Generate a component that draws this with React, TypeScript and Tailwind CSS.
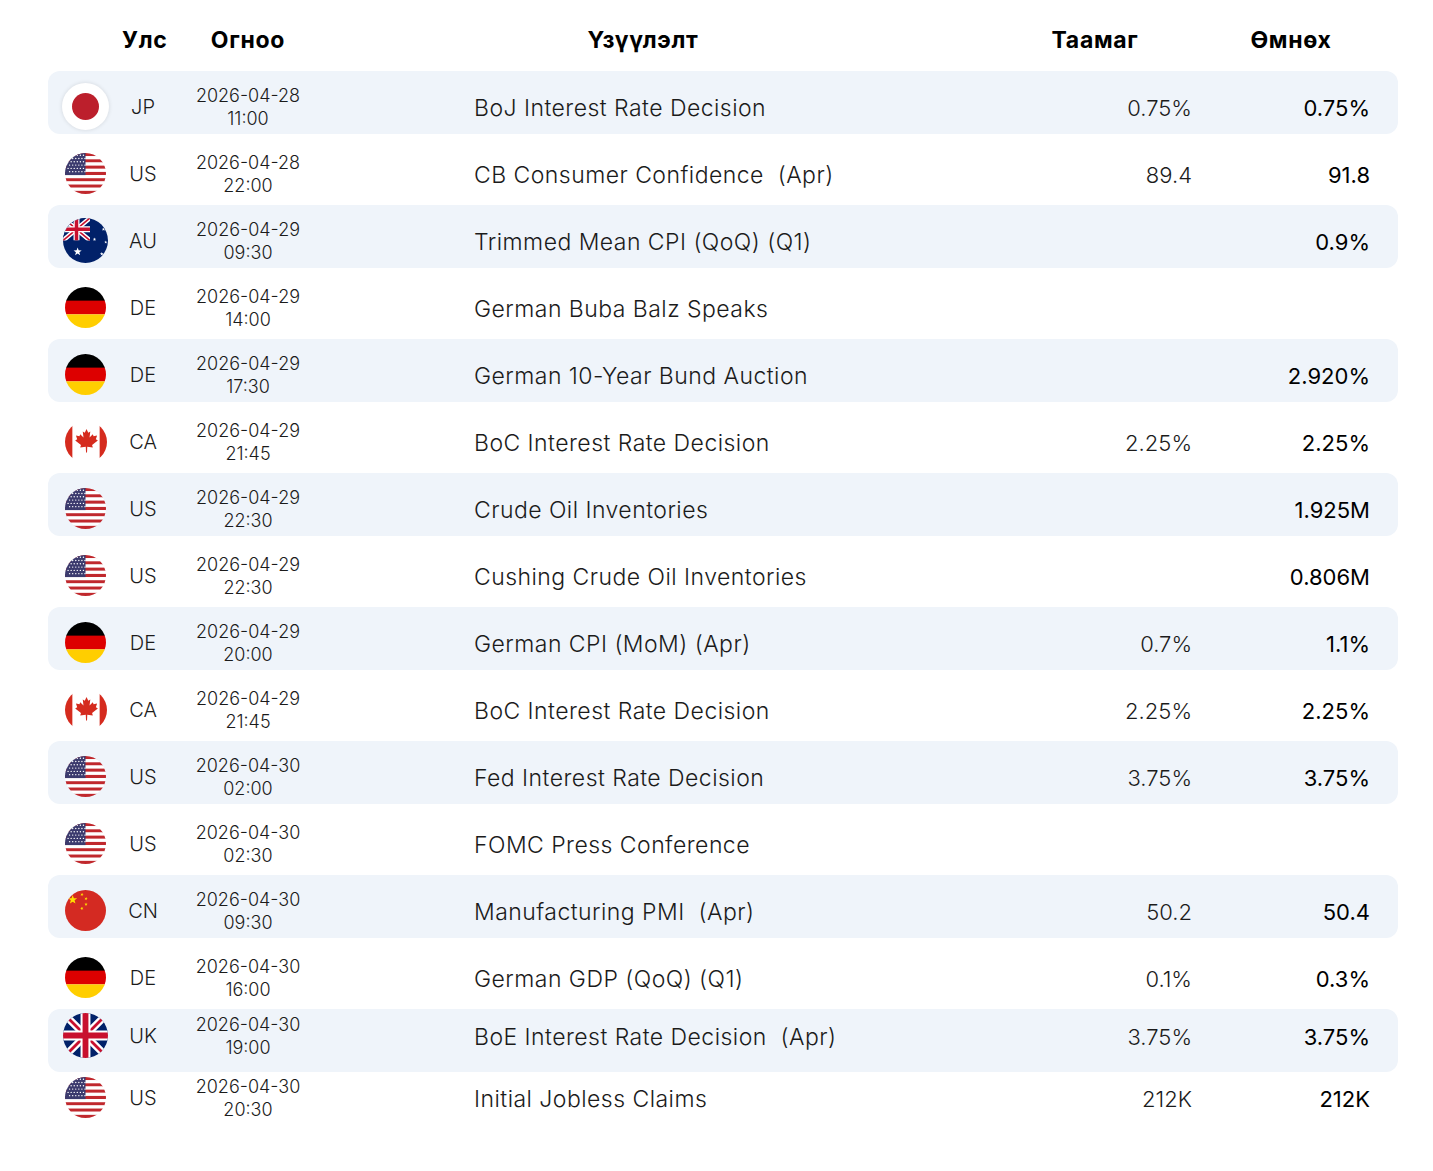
import { useId } from 'react'

type Code = 'JP' | 'US' | 'AU' | 'DE' | 'CA' | 'CN' | 'UK'

type Row = {
  code: Code
  date: string
  time: string
  event: string
  forecast?: string
  previous?: string
}

const rows: Row[] = [
  { code: 'JP', date: '2026-04-28', time: '11:00', event: 'BoJ Interest Rate Decision', forecast: '0.75%', previous: '0.75%' },
  { code: 'US', date: '2026-04-28', time: '22:00', event: 'CB Consumer Confidence  (Apr)', forecast: '89.4', previous: '91.8' },
  { code: 'AU', date: '2026-04-29', time: '09:30', event: 'Trimmed Mean CPI (QoQ) (Q1)', previous: '0.9%' },
  { code: 'DE', date: '2026-04-29', time: '14:00', event: 'German Buba Balz Speaks' },
  { code: 'DE', date: '2026-04-29', time: '17:30', event: 'German 10-Year Bund Auction', previous: '2.920%' },
  { code: 'CA', date: '2026-04-29', time: '21:45', event: 'BoC Interest Rate Decision', forecast: '2.25%', previous: '2.25%' },
  { code: 'US', date: '2026-04-29', time: '22:30', event: 'Crude Oil Inventories', previous: '1.925M' },
  { code: 'US', date: '2026-04-29', time: '22:30', event: 'Cushing Crude Oil Inventories', previous: '0.806M' },
  { code: 'DE', date: '2026-04-29', time: '20:00', event: 'German CPI (MoM) (Apr)', forecast: '0.7%', previous: '1.1%' },
  { code: 'CA', date: '2026-04-29', time: '21:45', event: 'BoC Interest Rate Decision', forecast: '2.25%', previous: '2.25%' },
  { code: 'US', date: '2026-04-30', time: '02:00', event: 'Fed Interest Rate Decision', forecast: '3.75%', previous: '3.75%' },
  { code: 'US', date: '2026-04-30', time: '02:30', event: 'FOMC Press Conference' },
  { code: 'CN', date: '2026-04-30', time: '09:30', event: 'Manufacturing PMI  (Apr)', forecast: '50.2', previous: '50.4' },
  { code: 'DE', date: '2026-04-30', time: '16:00', event: 'German GDP (QoQ) (Q1)', forecast: '0.1%', previous: '0.3%' },
  { code: 'UK', date: '2026-04-30', time: '19:00', event: 'BoE Interest Rate Decision  (Apr)', forecast: '3.75%', previous: '3.75%' },
  { code: 'US', date: '2026-04-30', time: '20:30', event: 'Initial Jobless Claims', forecast: '212K', previous: '212K' },
]

function star(cx: number, cy: number, r: number, rot = -90) {
  const pts: string[] = []
  for (let i = 0; i < 10; i++) {
    const rad = i % 2 === 0 ? r : r * 0.42
    const a = ((rot + i * 36) * Math.PI) / 180
    pts.push(`${(cx + rad * Math.cos(a)).toFixed(2)},${(cy + rad * Math.sin(a)).toFixed(2)}`)
  }
  return pts.join(' ')
}

function UnionJack({ w, h }: { w: number; h: number }) {
  const sw = w / 5
  return (
    <g>
      <rect width={w} height={h} fill="#012169" />
      <path d={`M0 0L${w} ${h}M${w} 0L0 ${h}`} stroke="#fff" strokeWidth={w / 6} />
      <path d={`M0 0L${w} ${h}M${w} 0L0 ${h}`} stroke="#C8102E" strokeWidth={w / 16} />
      <path d={`M${w / 2} 0V${h}M0 ${h / 2}H${w}`} stroke="#fff" strokeWidth={sw * 1.1} />
      <path d={`M${w / 2} 0V${h}M0 ${h / 2}H${w}`} stroke="#C8102E" strokeWidth={sw * 0.65} />
    </g>
  )
}

function Flag({ code }: { code: Code }) {
  const id = useId().replace(/:/g, '')
  if (code === 'JP') {
    return (
      <div className="flex h-[47px] w-[47px] items-center justify-center rounded-full bg-white shadow-[0_0_4px_rgba(0,0,0,0.12)]">
        <div className="h-[27px] w-[27px] rounded-full bg-[#bc1f2c]" />
      </div>
    )
  }
  const size = code === 'AU' || code === 'UK' ? 45 : code === 'CA' ? 42 : 41
  let body: React.ReactNode = null
  if (code === 'US') {
    const stripes = []
    for (let i = 0; i < 13; i++) {
      stripes.push(<rect key={i} y={(i * 40) / 13} width={40} height={40 / 13 + 0.05} fill={i % 2 === 0 ? '#c0282d' : '#ffffff'} />)
    }
    const dots = []
    for (let r = 0; r < 6; r++) {
      for (let c = 0; c < 6; c++) {
        dots.push(<circle key={`${r}-${c}`} cx={3 + c * 3 + (r % 2) * 1.5} cy={2.2 + r * 3.2} r={0.7} fill="#fff" />)
      }
    }
    body = (
      <>
        {stripes}
        <rect width={20} height={(40 / 13) * 7} fill="#3c3b6e" />
        {dots}
      </>
    )
  } else if (code === 'DE') {
    body = (
      <>
        <rect width={40} height={14} fill="#000" />
        <rect y={13.3} width={40} height={13.4} fill="#dd0000" />
        <rect y={26.7} width={40} height={13.3} fill="#ffce00" />
      </>
    )
  } else if (code === 'CA') {
    body = (
      <>
        <rect width={40} height={40} fill="#fff" />
        <rect width={7} height={40} fill="#d52b1e" />
        <rect x={33} width={7} height={40} fill="#d52b1e" />
        <path
          transform="translate(8.5 6.5) scale(0.24)"
          fill="#d52b1e"
          d="M50 5L57 20L65 15L62 38L75 25L78 33L92 30L87 45L95 50L72 68L75 78L53 75L52 98L48 98L47 75L25 78L28 68L5 50L13 45L8 30L22 33L25 25L38 38L35 15L43 20Z"
        />
      </>
    )
  } else if (code === 'CN') {
    body = (
      <>
        <rect width={40} height={40} fill="#d42a22" />
        <polygon points={star(7.5, 9.5, 4.6)} fill="#ffde00" />
        <polygon points={star(16.5, 4.5, 1.7, -60)} fill="#ffde00" />
        <polygon points={star(20.5, 8.5, 1.7, -75)} fill="#ffde00" />
        <polygon points={star(20.5, 14, 1.7, -90)} fill="#ffde00" />
        <polygon points={star(16.5, 18, 1.7, -110)} fill="#ffde00" />
      </>
    )
  } else if (code === 'AU') {
    body = (
      <>
        <rect width={40} height={40} fill="#012169" />
        <svg x={0} y={0} width={24} height={20} viewBox="0 0 24 20">
          <UnionJack w={24} h={20} />
        </svg>
        <polygon points={star(13, 30, 3.8)} fill="#fff" />
        <polygon points={star(36, 10, 1.6)} fill="#fff" />
        <polygon points={star(28, 19, 1.6)} fill="#fff" />
        <polygon points={star(38, 21.5, 1.4)} fill="#fff" />
        <polygon points={star(34.5, 32, 1.7)} fill="#fff" />
      </>
    )
  } else if (code === 'UK') {
    body = <UnionJack w={40} h={40} />
  }
  return (
    <svg width={size} height={size} viewBox="0 0 40 40">
      <defs>
        <clipPath id={`c${id}`}>
          <circle cx={20} cy={20} r={20} />
        </clipPath>
      </defs>
      <g clipPath={`url(#c${id})`}>{body}</g>
    </svg>
  )
}

const grid = 'grid grid-cols-[74px_42px_168px_1fr_194px_178px] pr-[28px]'

export default function App() {
  return (
    <div className="min-h-screen bg-white font-['Inter','Liberation_Sans',sans-serif] text-[#1b1b1b]">
      <div className="ml-[48px] flex w-[1350px] flex-col gap-1 pt-[14px]">
        {/* header */}
        <div className={`${grid} h-[53px] items-center text-[23px] font-bold tracking-[0.03em] text-black`}>
          <div />
          <div className="text-center">Улс</div>
          <div className="text-center">Огноо</div>
          <div className="pl-[142px]">
            <div className="w-[338px] text-center">Үзүүлэлт</div>
          </div>
          <div className="text-center">Таамаг</div>
          <div className="pl-5 text-center">Өмнөх</div>
        </div>

        {rows.map((r, i) => (
          <div
            key={i}
            className={`${grid} h-[63px] items-center rounded-xl ${i % 2 === 0 ? 'bg-[#eff4fa]' : ''} ${
              i === 15 ? '-mt-[14px] pt-2' : i === 14 ? 'pb-[10px]' : 'pt-2'
            }`}
          >
            <div className="flex justify-center pl-[1px]">
              <Flag code={r.code} />
            </div>
            <div className="text-center text-[20px] font-light">{r.code}</div>
            <div className="text-center text-[18px] font-light leading-[23px]">
              <div>{r.date}</div>
              <div>{r.time}</div>
            </div>
            <div className="whitespace-pre pl-[142px] pt-1 text-[23px] font-light tracking-[0.02em]">{r.event}</div>
            <div className="pt-1 text-right text-[22px] font-light">{r.forecast ?? ''}</div>
            <div className="pt-1 text-right text-[22px] font-normal text-black">{r.previous ?? ''}</div>
          </div>
        ))}
      </div>
    </div>
  )
}
